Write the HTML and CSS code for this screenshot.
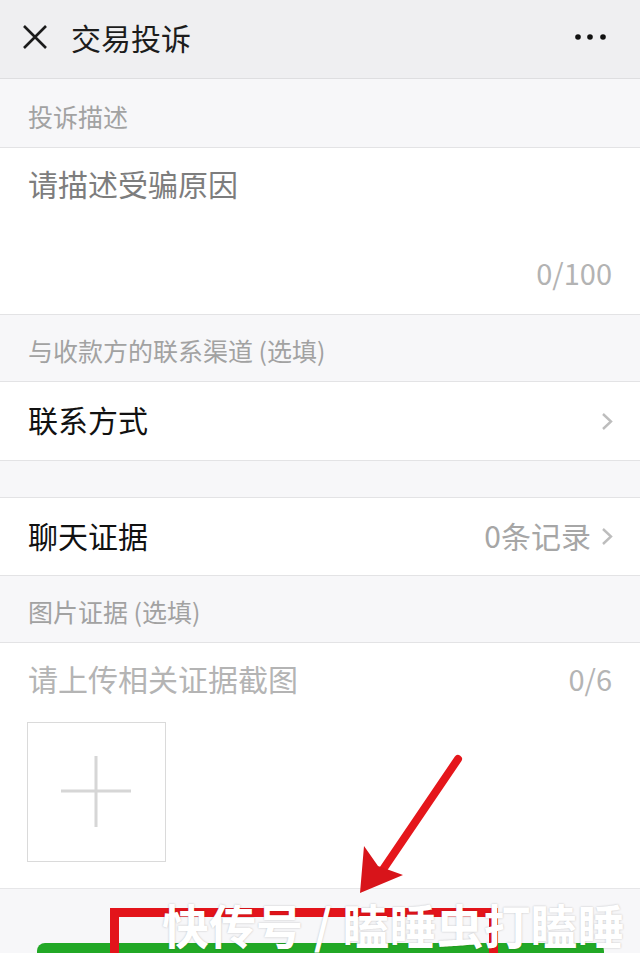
FILE: index.html
```html
<!DOCTYPE html>
<html lang="zh">
<head>
<meta charset="utf-8">
<title>交易投诉</title>
<link rel="stylesheet" href="styles.css">
</head>
<body>
<div class="page">
  <header class="nav">
    <svg class="nav-close" width="26" height="26" viewBox="0 0 26 26"><path d="M2 2 L24 24 M24 2 L2 24" stroke="#1b1b1b" stroke-width="2.6" fill="none" stroke-linecap="butt"/></svg>
    <h1 class="nav-title">交易投诉</h1>
    <svg class="nav-more" width="32" height="8" viewBox="0 0 32 8"><circle cx="3" cy="4" r="2.8" fill="#111"/><circle cx="15" cy="4" r="2.8" fill="#111"/><circle cx="28" cy="4" r="2.8" fill="#111"/></svg>
  </header>

  <div class="label label-first">投诉描述</div>
  <div class="textarea">
    <div class="placeholder">请描述受骗原因</div>
    <div class="counter">0/100</div>
  </div>

  <div class="label">与收款方的联系渠道 (选填)</div>
  <div class="row">
    <span class="row-title">联系方式</span>
    <svg class="chev" width="12" height="19" viewBox="0 0 12 19"><path d="M2 2 L10 9.5 L2 17" stroke="#bdbdbd" stroke-width="2.4" fill="none"/></svg>
  </div>

  <div class="gap"></div>
  <div class="row row-second">
    <span class="row-title">聊天证据</span>
    <span class="row-right"><span class="row-value">0条记录</span><svg class="chev" width="12" height="19" viewBox="0 0 12 19"><path d="M2 2 L10 9.5 L2 17" stroke="#bdbdbd" stroke-width="2.4" fill="none"/></svg></span>
  </div>

  <div class="label">图片证据 (选填)</div>
  <div class="upload">
    <div class="upload-head">
      <span class="upload-hint">请上传相关证据截图</span>
      <span class="upload-count">0/6</span>
    </div>
    <div class="upload-box">
      <svg width="72" height="72" viewBox="0 0 72 72"><path d="M0 35 H70 M35 0 V71" stroke="#d6d6d6" stroke-width="3" fill="none"/></svg>
    </div>
  </div>

  <div class="footer">
    <div class="btn-submit"></div>
  </div>

  <svg class="anno-arrow" width="120" height="150" viewBox="0 0 120 150">
    <path d="M98 9 L22 121" stroke="#e5161b" stroke-width="8" stroke-linecap="round" fill="none"/>
    <polygon points="0,143 4,96 18,116 43,125" fill="#d8141a"/>
  </svg>
  <div class="anno-box"></div>
  <div class="watermark">快传号 / 瞌睡虫打瞌睡</div>
</div>
</body>
</html>
```
FILE: styles.css
```css
html, body {
  margin: 0;
  padding: 0;
}
body {
  width: 640px;
  height: 953px;
  overflow: hidden;
  background: #f7f7f9;
  font-family: "Noto Sans CJK SC", "Noto Sans", sans-serif;
}
.page {
  position: relative;
  width: 640px;
  height: 953px;
  overflow: hidden;
}
.nav {
  height: 74px;
  background: #efeff1;
  border-bottom: 1px solid #dedee0;
  display: flex;
  align-items: center;
  padding: 0 33px 4px 22px;
}
.nav-close {
  display: block;
}
.nav-title {
  margin: 0 0 0 23px;
  font-size: 30px;
  font-weight: 400;
  color: #1c1c1c;
  line-height: 40px;
  flex: 1;
}
.nav-more {
  display: block;
}
.label {
  height: 62px;
  background: #f7f7f9;
  border-bottom: 1px solid #e3e3e5;
  padding: 4px 0 0 28px;
  display: flex;
  align-items: center;
  font-size: 25px;
  color: #a2a2a2;
}
.label-first {
  height: 62px;
  padding-top: 6px;
}
.textarea {
  background: #fff;
  border-bottom: 1px solid #e3e3e5;
  padding: 14px 28px 23px 28px;
  display: flex;
  flex-direction: column;
  box-sizing: border-box;
  height: 167px;
}
.placeholder {
  font-size: 30px;
  line-height: 42px;
  color: #7d7d7d;
}
.counter {
  margin-top: auto;
  text-align: right;
  font-size: 29px;
  line-height: 38px;
  color: #b3b3b3;
}
.row {
  height: 74px;
  background: #fff;
  border-bottom: 1px solid #e3e3e5;
  display: flex;
  align-items: center;
  justify-content: space-between;
  padding: 0 27px 4px 28px;
}
.row-second {
  height: 73px;
  border-top: 1px solid #e3e3e5;
}
.row-title {
  font-size: 30px;
  color: #111;
}
.row-right {
  display: flex;
  align-items: center;
  gap: 10px;
}
.row-value {
  font-size: 30px;
  color: #a6a6a6;
}
.chev {
  display: block;
  margin-top: 4px;
}
.gap {
  height: 36px;
  background: #f7f7f9;
}
.upload {
  background: #fff;
  border-bottom: 1px solid #e6e6e8;
  padding: 14px 28px 0 27px;
  box-sizing: border-box;
  height: 246px;
}
.upload-head {
  display: flex;
  justify-content: space-between;
  align-items: center;
  height: 42px;
}
.upload-hint {
  font-size: 30px;
  color: #b4b4b4;
  padding-left: 1px;
}
.upload-count {
  font-size: 29px;
  color: #b4b4b4;
}
.upload-box {
  margin-top: 23px;
  width: 137px;
  height: 138px;
  border: 1.5px solid #dadada;
  display: flex;
  align-items: center;
  justify-content: center;
}
.footer {
  background: #f7f7f9;
  padding: 54px 36px 0 37px;
}
.btn-submit {
  height: 60px;
  background: #22a826;
  border-radius: 8px;
}
.anno-arrow {
  position: absolute;
  left: 360px;
  top: 750px;
}
.anno-box {
  position: absolute;
  left: 110px;
  top: 908px;
  width: 370px;
  height: 80px;
  border: 9px solid #e3141b;
}
.watermark {
  position: absolute;
  left: 162px;
  top: 901px;
  font-size: 47px;
  line-height: 46px;
  font-weight: 700;
  color: #fff;
  white-space: nowrap;
  text-shadow: 0 0 2px rgba(0,0,0,0.25);
}
```
